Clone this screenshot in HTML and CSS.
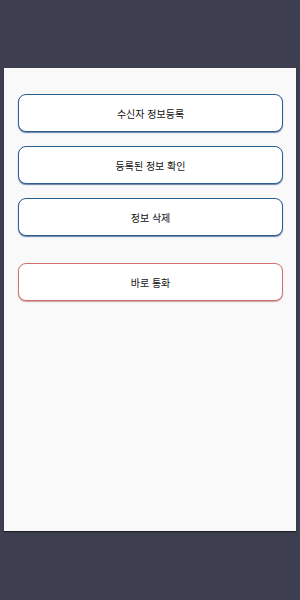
FILE: index.html
```html
<!DOCTYPE html>
<html lang="ko">
<head>
<meta charset="utf-8">
<link rel="stylesheet" href="styles.css">
</head>
<body>
<div class="screen">
  <div class="panel">
    <div class="group">
      <button class="btn btn-blue">수신자 정보등록</button>
      <button class="btn btn-blue">등록된 정보 확인</button>
      <button class="btn btn-blue">정보 삭제</button>
    </div>
    <button class="btn btn-red">바로 통화</button>
  </div>
</div>
</body>
</html>
```
FILE: styles.css
```css
html, body {
  margin: 0;
  padding: 0;
  background: #3d3f50;
  width: 300px;
  height: 600px;
  overflow: hidden;
}
.screen {
  padding: 68px 4px 0 4px;
}
.panel {
  background: #f9f9f9;
  height: 463px;
  box-sizing: border-box;
  padding: 26px 13px 0 14px;
  display: flex;
  flex-direction: column;
  gap: 27px;
  box-shadow: 0 1px 1px rgba(0,0,0,0.5);
}
.group {
  display: flex;
  flex-direction: column;
  gap: 14px;
}
.btn {
  display: block;
  width: 100%;
  height: 38px;
  box-sizing: border-box;
  background: #ffffff;
  border-radius: 8px;
  font-family: "Noto Sans CJK KR", "Noto Sans", sans-serif;
  font-size: 10px;
  color: #111;
  padding: 0;
  margin: 0;
}
.btn-blue {
  border: 1px solid #2a5f93;
  box-shadow: 0 1px 1px rgba(10,50,100,0.6);
}
.btn-red {
  border: 1px solid #d07070;
  box-shadow: 0 1px 1px rgba(120,40,40,0.4);
}
```
